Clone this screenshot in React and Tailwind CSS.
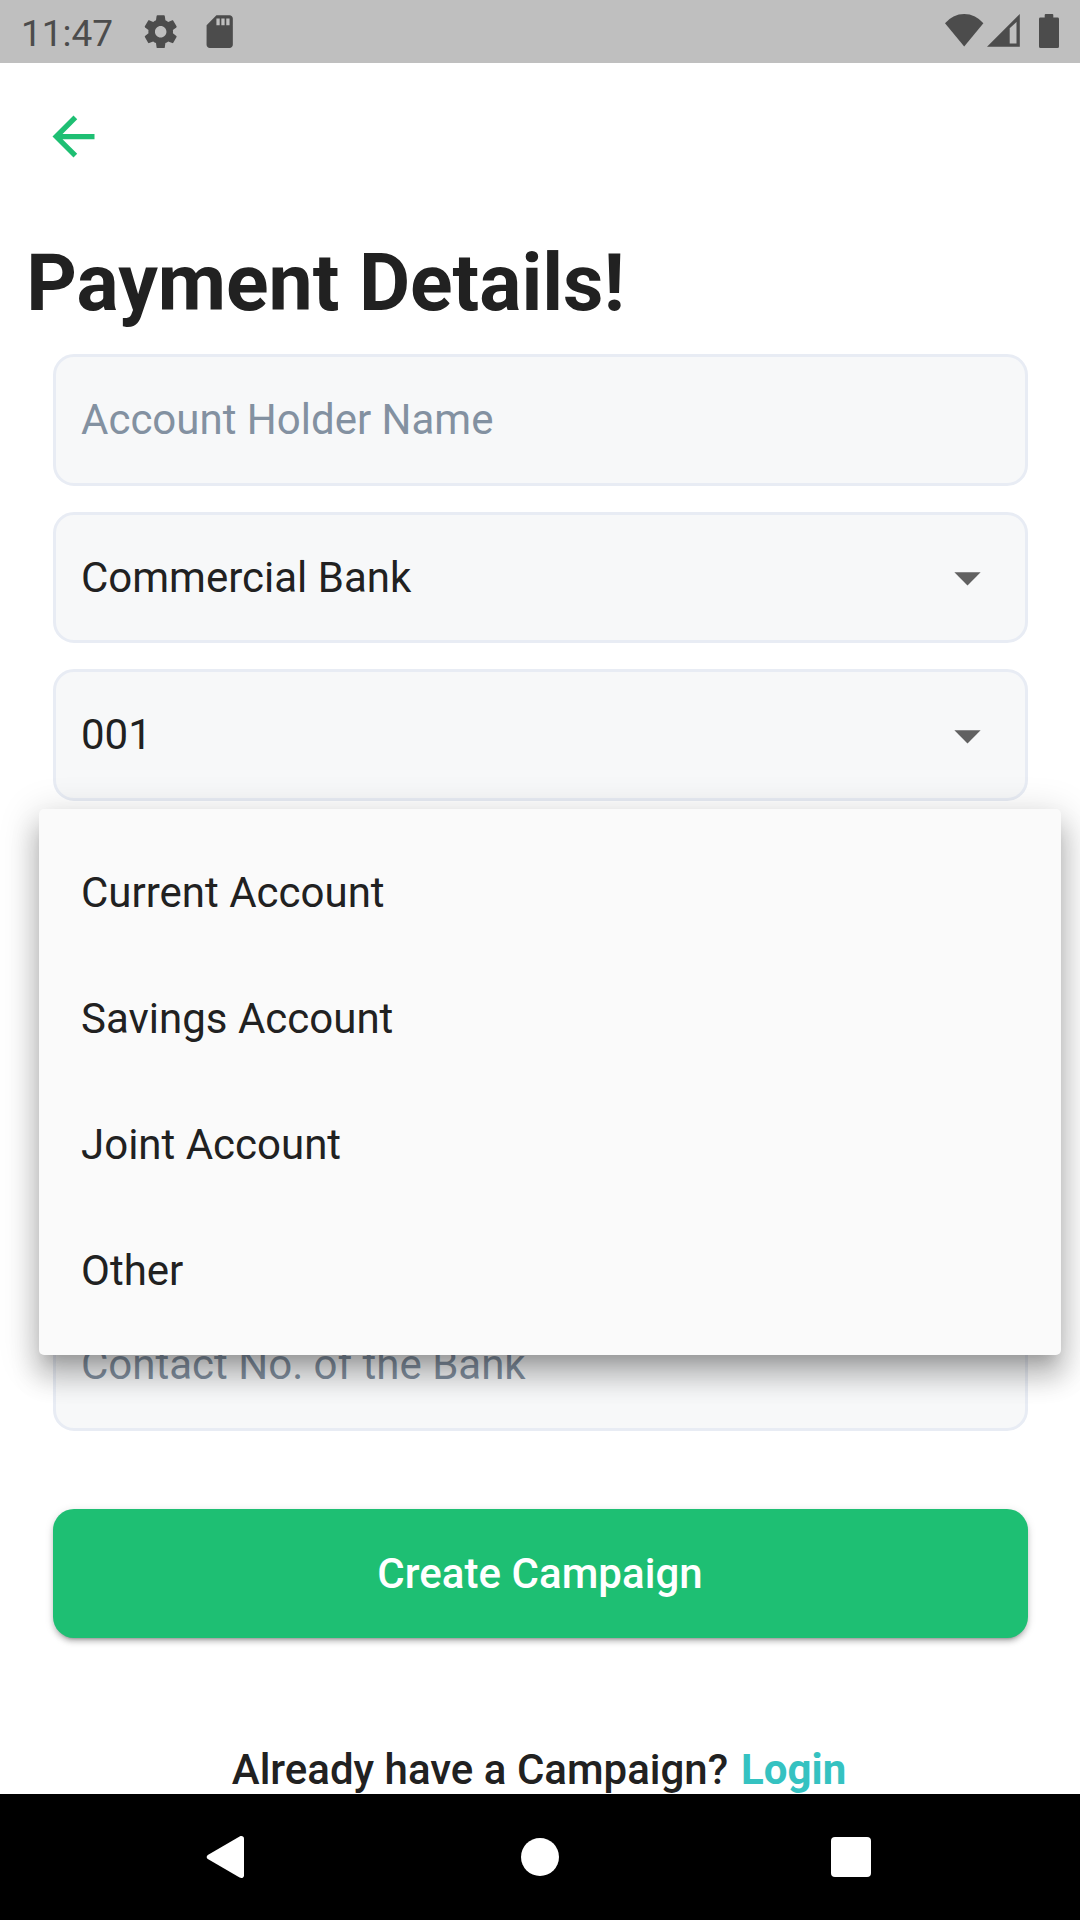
import React from "react";

const ACCOUNT_TYPES = ["Current Account", "Savings Account", "Joint Account", "Other"];

function StatusBar() {
  return (
    <header className="flex h-[63px] shrink-0 items-center justify-between bg-[#bfbfbf] px-[21px] text-[#4c4c4c]">
      <div className="flex items-center">
        <span className="w-[120px] pt-[3px] text-[37px] leading-[43px]">11:47</span>
        <svg viewBox="0 0 24 24" className="h-[39.4px] w-[39.4px]" fill="currentColor">
          <path d="M19.43 12.98c.04-.32.07-.64.07-.98s-.03-.66-.07-.98l2.11-1.65c.19-.15.24-.42.12-.64l-2-3.46c-.12-.22-.39-.3-.61-.22l-2.49 1c-.52-.4-1.08-.73-1.69-.98l-.38-2.65C14.46 2.18 14.25 2 14 2h-4c-.25 0-.46.18-.49.42l-.38 2.65c-.61.25-1.17.59-1.69.98l-2.49-1c-.23-.09-.49 0-.61.22l-2 3.46c-.13.22-.07.49.12.64l2.11 1.65c-.04.32-.07.65-.07.98s.03.66.07.98l-2.11 1.65c-.19.15-.24.42-.12.64l2 3.46c.12.22.39.3.61.22l2.49-1c.52.4 1.08.73 1.69.98l.38 2.65c.03.24.24.42.49.42h4c.25 0 .46-.18.49-.42l.38-2.65c.61-.25 1.17-.59 1.69-.98l2.49 1c.23.09.49 0 .61-.22l2-3.46c.12-.22.07-.49-.12-.64l-2.11-1.65zM12 15.5c-1.93 0-3.5-1.57-3.5-3.5s1.57-3.5 3.5-3.5 3.5 1.57 3.5 3.5-1.57 3.5-3.5 3.5z" />
        </svg>
        <svg viewBox="0 0 24 24" className="ml-[19.4px] h-[39.4px] w-[39.4px]" fill="currentColor">
          <path d="M18 2h-8L4.02 8 4 20c0 1.1.9 2 2 2h12c1.1 0 2-.9 2-2V4c0-1.1-.9-2-2-2zm-6 6h-2V4h2v4zm3 0h-2V4h2v4zm3 0h-2V4h2v4z" />
        </svg>
      </div>
      <div className="flex items-start self-start pt-[14px]">
        <svg viewBox="0 0 38.4 33" className="h-[33px] w-[38.4px]" fill="currentColor">
          <path d="M0 9.3A24.5 24.5 0 0 1 38.4 9.3L19.2 32.4z" />
        </svg>
        <svg viewBox="0 0 33 33" className="ml-[3.5px] h-[33px] w-[33px]" fill="currentColor" fillRule="evenodd">
          <path d="M0 32.7L32.8 0V32.7zM22.7 14.3V29.6H29.5V7.9z" />
        </svg>
        <svg viewBox="0 0 20 34" className="ml-[18.9px] h-[34px] w-[20px]" fill="currentColor">
          <path d="M6.7 0H13.3a1 1 0 0 1 1 1V3.6H18.6a1.4 1.4 0 0 1 1.4 1.4V32.4a1.5 1.5 0 0 1-1.5 1.5H1.5a1.5 1.5 0 0 1-1.5-1.5V5A1.4 1.4 0 0 1 1.4 3.6H5.7V1a1 1 0 0 1 1-1z" />
        </svg>
      </div>
    </header>
  );
}

function Field({ placeholder, value, dropdown }) {
  return (
    <div className="flex h-[131.25px] items-center justify-between rounded-[21px] border-[3px] border-[#e8ecf4] bg-[#f7f8f9] pl-[25.5px] pr-[25.5px] pt-[0.4px] text-[42px] leading-[50px]">
      {placeholder && <span className="text-[#8391a1]">{placeholder}</span>}
      {value && <span>{value}</span>}
      {dropdown && (
        <svg viewBox="0 0 24 24" className="h-[63px] w-[63px]" fill="#616161">
          <path d="M7 10l5 5 5-5z" />
        </svg>
      )}
    </div>
  );
}

function AccountTypeMenu() {
  return (
    <ul className="absolute -left-[13.5px] top-[454.6px] w-[1022px] rounded-[5px] bg-[#fafafa] py-[21px] shadow-[0_13px_13px_-8px_rgba(0,0,0,0.16),0_21px_26px_3px_rgba(0,0,0,0.18),0_8px_37px_5px_rgba(0,0,0,0.15)]">
      {ACCOUNT_TYPES.map((type) => (
        <li key={type} className="flex h-[126px] items-center pl-[42px] text-[42px]">
          {type}
        </li>
      ))}
    </ul>
  );
}

function NavigationBar() {
  return (
    <nav className="flex h-[126px] shrink-0 items-center justify-between bg-black pl-[206px] pr-[209px]">
      <svg viewBox="0 0 38 42" className="h-[42px] w-[38px]" fill="#fff">
        <path d="M1.8 18.9L33.6.5C35.8-.6 38 .4 38 2.6V39.4C38 41.6 35.8 42.6 33.6 41.5L1.8 23.1C.3 22.1.3 19.9 1.8 18.9z" />
      </svg>
      <span className="ml-[5px] h-[38.4px] w-[38.4px] rounded-full bg-white" />
      <span className="h-10 w-10 rounded-[4px] bg-white" />
    </nav>
  );
}

export default function App() {
  return (
    <div className="flex h-[1920px] w-[1080px] flex-col overflow-hidden bg-white font-['Roboto',sans-serif] text-[#212121]">
      <StatusBar />
      <main className="min-h-0 flex-1 overflow-hidden">
        <button className="ml-[42px] mt-[42px] block h-[63px] w-[63px]" aria-label="Back">
          <svg viewBox="0 0 24 24" className="h-[63px] w-[63px]" fill="#1ebf73">
            <path d="M20 11H7.83l5.59-5.59L12 4l-8 8 8 8 1.41-1.41L7.83 13H20v-2z" />
          </svg>
        </button>
        <h1 className="mt-[69px] pl-[26.25px] text-[78.75px] font-bold leading-[92px]">Payment Details!</h1>
        <form className="relative mx-[52.5px] mt-[25.3px] flex flex-col gap-[26.25px]">
          <Field placeholder="Account Holder Name" />
          <Field value="Commercial Bank" dropdown />
          <Field value="001" dropdown />
          <Field />
          <Field />
          <Field />
          <Field placeholder="Contact No. of the Bank" />
          <AccountTypeMenu />
        </form>
        <button className="mx-[52.5px] mt-[78.75px] flex h-[129px] w-[975px] items-center justify-center rounded-[21px] bg-[#1ebf73] text-[42px] font-medium tracking-[0.05px] text-white shadow-[0_5px_3px_-4px_rgba(0,0,0,0.25),0_4px_5px_0_rgba(0,0,0,0.16),0_2px_10px_0_rgba(0,0,0,0.12)]">
          Create Campaign
        </button>
        <p className="mt-[107px] flex justify-center gap-[13px] whitespace-pre pr-[2px] text-[42px] font-medium leading-[49px]">
          <span>Already have a Campaign?</span>
          <span className="font-bold text-[#35c2c1]">Login</span>
        </p>
      </main>
      <NavigationBar />
    </div>
  );
}
